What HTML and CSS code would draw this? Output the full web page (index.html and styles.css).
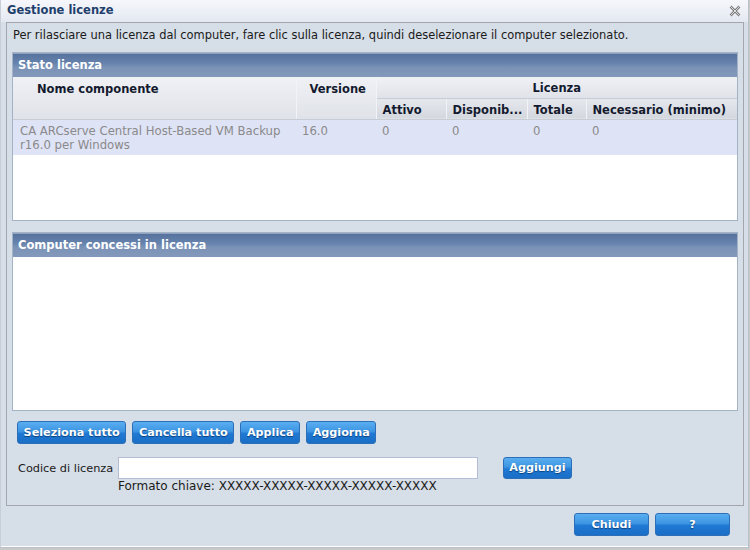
FILE: index.html
```html
<!DOCTYPE html>
<html lang="it">
<head>
<meta charset="utf-8">
<title>Gestione licenze</title>
<link rel="stylesheet" href="styles.css">
</head>
<body>
<div class="window">
  <div class="titlebar">
    <span class="title">Gestione licenze</span>
    <svg class="close" width="12" height="12" viewBox="0 0 12 12">
      <path d="M1.5 1.5 L10.5 10.5 M10.5 1.5 L1.5 10.5" stroke="#7d7d7d" stroke-width="2.6" fill="none"/>
      <path d="M1.5 1.5 L10.5 10.5 M10.5 1.5 L1.5 10.5" stroke="#e6e6e6" stroke-width="0.9" fill="none"/>
    </svg>
  </div>
  <div class="content">
    <p class="intro">Per rilasciare una licenza dal computer, fare clic sulla licenza, quindi deselezionare il computer selezionato.</p>

    <div class="panel panel-stato">
      <div class="panel-head">Stato licenza</div>
      <table class="grid">
        <colgroup>
          <col class="c-nome"><col class="c-ver"><col class="c-att"><col class="c-disp"><col class="c-tot"><col class="c-nec">
        </colgroup>
        <thead>
          <tr class="h1">
            <th rowspan="2" class="th-nome"><span>Nome componente</span></th>
            <th rowspan="2" class="th-ver"><span>Versione</span></th>
            <th colspan="4" class="th-lic">Licenza</th>
          </tr>
          <tr class="h2">
            <th>Attivo</th>
            <th>Disponib...</th>
            <th>Totale</th>
            <th class="last">Necessario (minimo)</th>
          </tr>
        </thead>
        <tbody>
          <tr class="row">
            <td class="td-nome">CA ARCserve Central Host-Based VM Backup r16.0 per Windows</td>
            <td>16.0</td>
            <td>0</td>
            <td>0</td>
            <td>0</td>
            <td>0</td>
          </tr>
        </tbody>
      </table>
    </div>

    <div class="panel panel-comp">
      <div class="panel-head">Computer concessi in licenza</div>
    </div>

    <div class="actions">
      <button class="btn">Seleziona tutto</button>
      <button class="btn">Cancella tutto</button>
      <button class="btn">Applica</button>
      <button class="btn">Aggiorna</button>
    </div>

    <div class="keyrow">
      <label class="keylabel" for="key">Codice di licenza</label>
      <input id="key" class="keyinput" type="text">
      <button class="btn btn-add">Aggiungi</button>
    </div>
    <div class="keyhint">Formato chiave: XXXXX-XXXXX-XXXXX-XXXXX-XXXXX</div>
  </div>
  <div class="footer">
    <button class="btn btn-foot">Chiudi</button>
    <button class="btn btn-foot">?</button>
  </div>
</div>
<div class="below"></div>
</body>
</html>
```

FILE: styles.css
```css
* { box-sizing: border-box; }

html, body {
  margin: 0;
  padding: 0;
  background: #c9c9c9;
}

body {
  font-family: "DejaVu Sans", "Liberation Sans", sans-serif;
  font-size: 11.4px;
  color: #1a1a1a;
  width: 750px;
  height: 550px;
  overflow: hidden;
}

.window {
  width: 749px;
  height: 548px;
  background: #d6dee7;
  border: 1px solid #b9c0c9;
  border-top: none;
  border-left-color: #c7ced6;
  box-shadow: inset 0 -1px 0 #ffffff;
  display: flex;
  flex-direction: column;
}

.titlebar {
  height: 22px;
  flex: none;
  display: flex;
  align-items: center;
  justify-content: space-between;
  padding: 0 7px 2px 6px;
  background: linear-gradient(#f6f7fc, #e3e8f1);
}

.title {
  font-weight: bold;
  font-size: 11.5px;
  color: #1f3f6c;
}

.close {
  display: block;
  margin-top: 1px;
}

.content {
  margin: 0 4px 0 5px;
  height: 484px;
  flex: none;
  border: 1px solid #a3a7ad;
  padding: 5px 5px 0 5px;
  display: flex;
  flex-direction: column;
}

.intro {
  margin: 0 0 10px 0;
  line-height: 14px;
  height: 14px;
  font-size: 11.45px;
  white-space: nowrap;
  padding-left: 1px;
}

.panel {
  border: 1px solid #a4b2c6;
  background: #ffffff;
  width: 726px;
  flex: none;
}

.panel-stato { height: 169px; }
.panel-comp { height: 179px; margin-top: 11px; }

.panel-head {
  height: 24px;
  line-height: 22px;
  padding-left: 5px;
  color: #ffffff;
  font-weight: bold;
  font-size: 11.5px;
  background: linear-gradient(#56729d 0%, #6683ad 40%, #7b93b7 60%, #8399bb 100%);
  border-top: 1px solid #8ea3c2;
}

.grid {
  width: 724px;
  border-collapse: collapse;
  table-layout: fixed;
}

.c-nome { width: 283px; }
.c-ver { width: 80px; }
.c-att { width: 70px; }
.c-disp { width: 81px; }
.c-tot { width: 59px; }
.c-nec { width: 151px; }

.grid th {
  font-weight: bold;
  font-size: 11.5px;
  text-align: left;
  color: #141a2e;
  padding: 2px 0 0 6px;
  border-right: 1px solid #f2f3f6;
  border-bottom: 1px solid #c8ccd4;
  white-space: nowrap;
  overflow: hidden;
  vertical-align: middle;
}

.grid .last { border-right: none; }

.grid .h1 th {
  height: 21px;
  background: linear-gradient(#f0f1f5, #dfe2e8);
}

.grid .h2 th {
  height: 21px;
  background: linear-gradient(#e6e8ed, #d3d7de);
}

.grid .th-nome,
.grid .th-ver {
  padding: 0;
  vertical-align: top;
  background: linear-gradient(#f0f1f5 0px, #dfe2e8 20px, #e6e8ed 21px, #d3d7de 41px);
}

.grid .th-nome span,
.grid .th-ver span {
  display: block;
  line-height: 21px;
  padding-top: 2px;
}

.grid .th-nome span { padding-left: 24px; }
.grid .th-ver span { padding-left: 13px; }

.grid .th-lic {
  text-align: center;
  padding: 2px 0 0 0;
  border-right: none;
}

.grid td {
  background: #dfe3f6;
  color: #8a8a8a;
  vertical-align: top;
  padding: 4px 6px 0 6px;
  line-height: 14px;
  height: 36px;
  font-size: 11.7px;
}

.grid .td-nome { padding-left: 7px; padding-right: 2px; }

.actions {
  display: flex;
  gap: 6px;
  margin-top: 10px;
  padding-left: 5px;
}

.btn {
  font-family: inherit;
  font-size: 11.2px;
  font-weight: bold;
  color: #ffffff;
  text-shadow: 0 1px 1px #0b3f7a;
  height: 23px;
  padding: 0 5.6px;
  border: 1px solid #2c6fb8;
  border-radius: 3px;
  background: linear-gradient(#5aaef0 0%, #3d95e2 45%, #1f79d4 55%, #1a6ec6 100%);
  cursor: pointer;
  line-height: 20px;
}

.keyrow {
  display: flex;
  align-items: center;
  margin-top: 13px;
  height: 22px;
}

.keylabel {
  width: 106px;
  padding-left: 6px;
  font-size: 11.3px;
}

.keyinput {
  width: 360px;
  height: 22px;
  border: 1px solid #b4bcd6;
  background: #ffffff;
  margin: 0;
}

.btn-add {
  margin-left: 25px;
  height: 22px;
  width: 69px;
  padding: 0;
}

.keyhint {
  margin-left: 106px;
  line-height: 14px;
  margin-top: 0px;
  font-size: 12px;
}

.footer {
  display: flex;
  justify-content: flex-end;
  gap: 6px;
  padding: 7px 18px 0 0;
}

.btn-foot {
  width: 75px;
  height: 23px;
}

.below {
  height: 2px;
  background: #c9c9c9;
}
```
